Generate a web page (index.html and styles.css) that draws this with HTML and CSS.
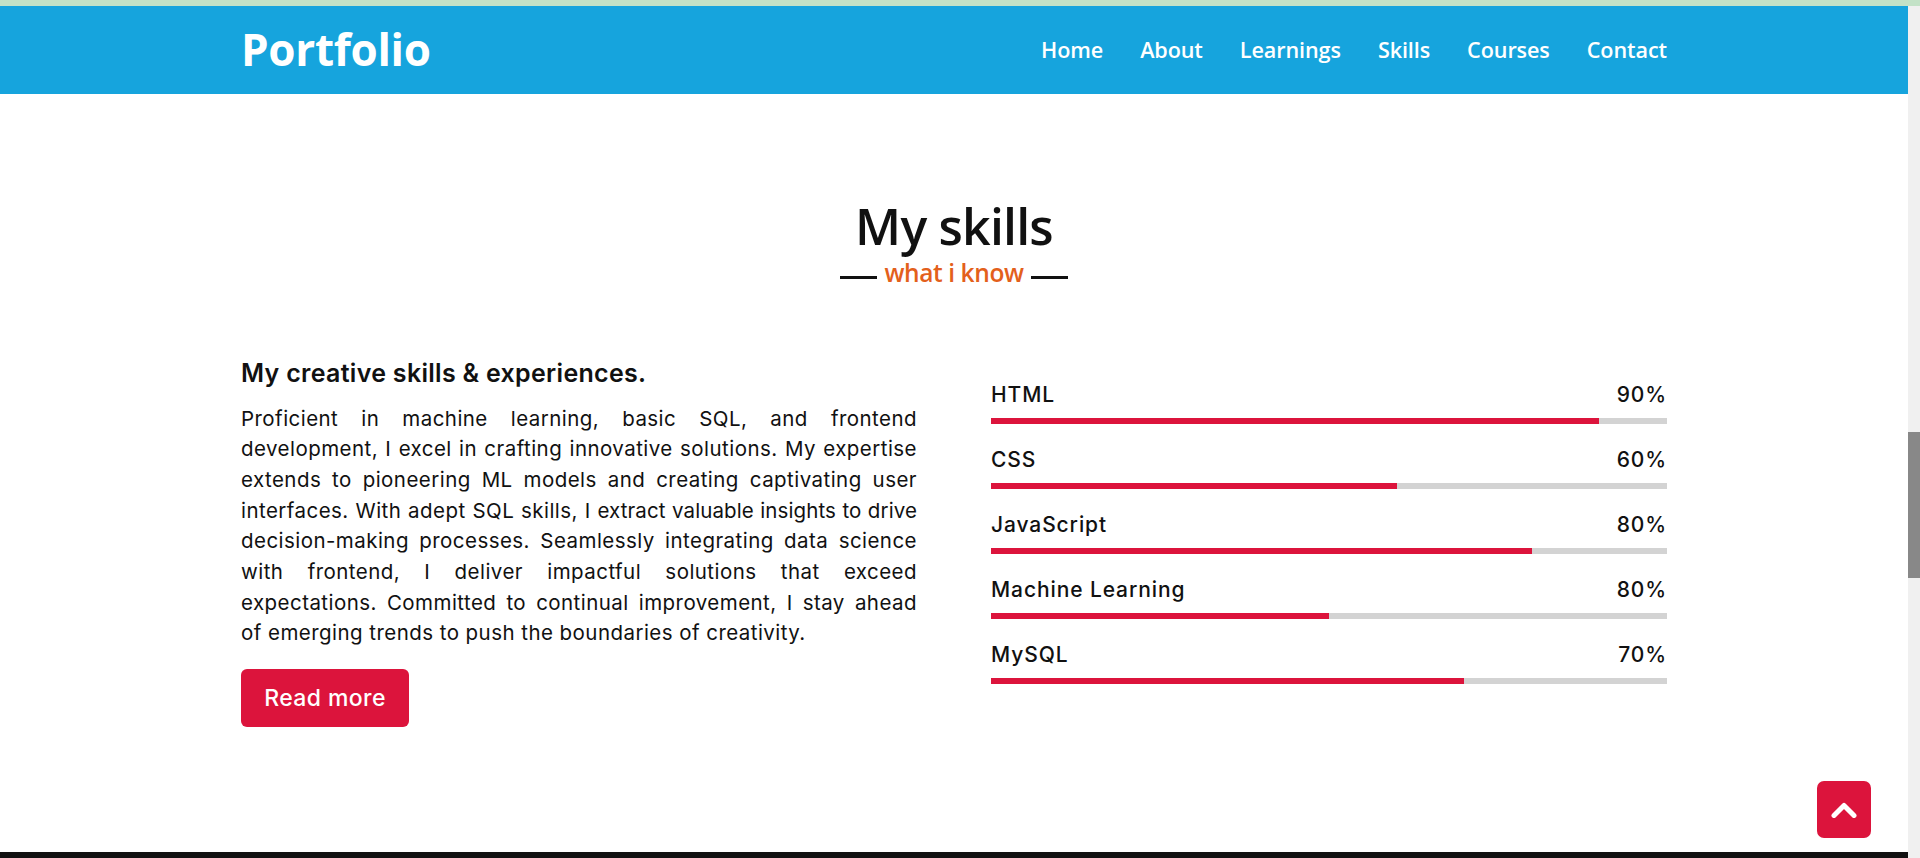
FILE: index.html
```html
<!DOCTYPE html>
<html lang="en">
<head>
<meta charset="utf-8">
<title>Portfolio - Skills</title>
<link rel="stylesheet" href="styles.css">
</head>
<body>
<div class="topstrip"></div>
<div class="viewport">
  <div class="page">
    <nav class="navbar">
      <div class="container nav-inner">
        <a class="logo" href="#">Portfolio</a>
        <ul class="menu">
          <li><a href="#">Home</a></li>
          <li><a href="#">About</a></li>
          <li><a href="#">Learnings</a></li>
          <li><a href="#">Skills</a></li>
          <li><a href="#">Courses</a></li>
          <li><a href="#">Contact</a></li>
        </ul>
      </div>
    </nav>
    <section class="skills">
      <div class="container">
        <h2 class="title">My skills</h2>
        <div class="subtitle"><span class="rule"></span><span class="subtext">what i know</span><span class="rule"></span></div>
        <div class="skills-content">
          <div class="left">
            <h3 class="text">My creative skills &amp; experiences.</h3>
            <p class="desc">Proficient in machine learning, basic SQL, and frontend development, I excel in crafting innovative solutions. My expertise extends to pioneering ML models and creating captivating user interfaces. With adept SQL skills, I <span class="snug">extract valuable insights to drive</span> decision-making processes. Seamlessly integrating data science with frontend, I deliver impactful solutions that exceed expectations. Committed to continual improvement, I stay ahead of emerging trends to push the boundaries of creativity.</p>
            <a class="btn" href="#">Read more</a>
          </div>
          <div class="right">
            <div class="bar">
              <div class="info"><span>HTML</span><span>90%</span></div>
              <div class="line"><div class="fill" style="width:90%"></div></div>
            </div>
            <div class="bar">
              <div class="info"><span>CSS</span><span>60%</span></div>
              <div class="line"><div class="fill" style="width:60%"></div></div>
            </div>
            <div class="bar">
              <div class="info"><span>JavaScript</span><span>80%</span></div>
              <div class="line"><div class="fill" style="width:80%"></div></div>
            </div>
            <div class="bar">
              <div class="info"><span>Machine Learning</span><span>80%</span></div>
              <div class="line"><div class="fill" style="width:50%"></div></div>
            </div>
            <div class="bar">
              <div class="info"><span>MySQL</span><span>70%</span></div>
              <div class="line"><div class="fill" style="width:70%"></div></div>
            </div>
          </div>
        </div>
      </div>
    </section>
    <footer class="footer"></footer>
  </div>
  <div class="scrollbar"><div class="thumb"></div></div>
</div>
<a class="scroll-up" href="#" aria-label="Scroll to top">
  <svg width="26" height="16" viewBox="0 0 26 16"><polyline points="3,13.5 13,3.5 23,13.5" fill="none" stroke="#fff" stroke-width="5" stroke-linecap="round" stroke-linejoin="round"/></svg>
</a>
</body>
</html>
```

FILE: styles.css
```css
* { box-sizing: border-box; margin: 0; padding: 0; }
html, body { height: 100%; }
body {
  background: #fff;
  font-family: "Inter", "Liberation Sans", sans-serif;
  color: #111;
  overflow: hidden;
}
a { text-decoration: none; }
ul { list-style: none; }

.topstrip { height: 6px; background: #c3e2c7; }

.viewport { display: flex; height: 852px; }
.page { flex: 1; display: flex; flex-direction: column; overflow: hidden; }
.scrollbar { width: 12px; background: #f0f0f0; padding-top: 426px; }
.thumb { height: 146px; background: #888; }

.container { width: 1426px; margin: 0 auto; }

.navbar { height: 88px; background: #16a4dd; flex-shrink: 0; }
.nav-inner { height: 100%; display: flex; align-items: center; justify-content: space-between; }
.logo {
  font-family: "Open Sans", sans-serif;
  font-size: 44px;
  font-weight: 700;
  color: #fff;
  letter-spacing: -0.3px;
  margin-top: -2px;
}
.menu { display: flex; gap: 37px; margin-top: -2px; }
.menu a {
  font-family: "Open Sans", sans-serif;
  font-size: 21.6px;
  font-weight: 600;
  color: #fff;
  letter-spacing: -0.1px;
}

.skills { flex: 1; padding-top: 97.5px; }
.title {
  font-family: "Open Sans", sans-serif;
  font-size: 50px;
  font-weight: 600;
  line-height: 68px;
  text-align: center;
  color: #111;
  letter-spacing: -0.8px;
}
.subtitle { display: flex; justify-content: center; align-items: center; height: 24px; margin-top: 1px; }
.rule { width: 37px; height: 3px; background: #111; margin-top: 9px; }
.subtext {
  font-family: "Open Sans", sans-serif;
  font-size: 24.5px;
  font-weight: 600;
  line-height: 24px;
  color: #e3601b;
  padding: 0 7px;
  letter-spacing: -0.4px;
}

.skills-content {
  display: grid;
  grid-template-columns: 1fr 1fr;
  gap: 74px;
  margin-top: 73px;
}
.left .text { font-size: 25px; font-weight: 600; line-height: 30px; color: #111; letter-spacing: 0.3px; }
.left .desc {
  margin-top: 16px;
  font-size: 20.5px;
  line-height: 30.7px;
  letter-spacing: 0.45px;
  text-align: justify;
  color: #111;
}
.left .desc .snug { letter-spacing: 0.1px; }
.btn {
  display: inline-flex;
  align-items: center;
  justify-content: center;
  margin-top: 20px;
  width: 168px;
  height: 58px;
  background: #dc143c;
  color: #fff;
  border-radius: 6px;
  font-size: 23px;
  font-weight: 500;
  letter-spacing: 0.4px;
}

.right { padding-top: 22px; }
.bar { margin-bottom: 21px; }
.info { display: flex; justify-content: space-between; font-size: 21px; font-weight: 500; line-height: 30px; color: #111; letter-spacing: 0.9px; }
.line { margin-top: 8px; height: 6px; background: #d3d3d3; }
.fill { height: 100%; background: #dc143c; }

.footer { height: 6px; background: #111; flex-shrink: 0; }

.scroll-up {
  position: fixed;
  right: 49px;
  bottom: 20px;
  width: 54px;
  height: 57px;
  background: #dc143c;
  border-radius: 7px;
  display: flex;
  align-items: center;
  justify-content: center;
}
```
